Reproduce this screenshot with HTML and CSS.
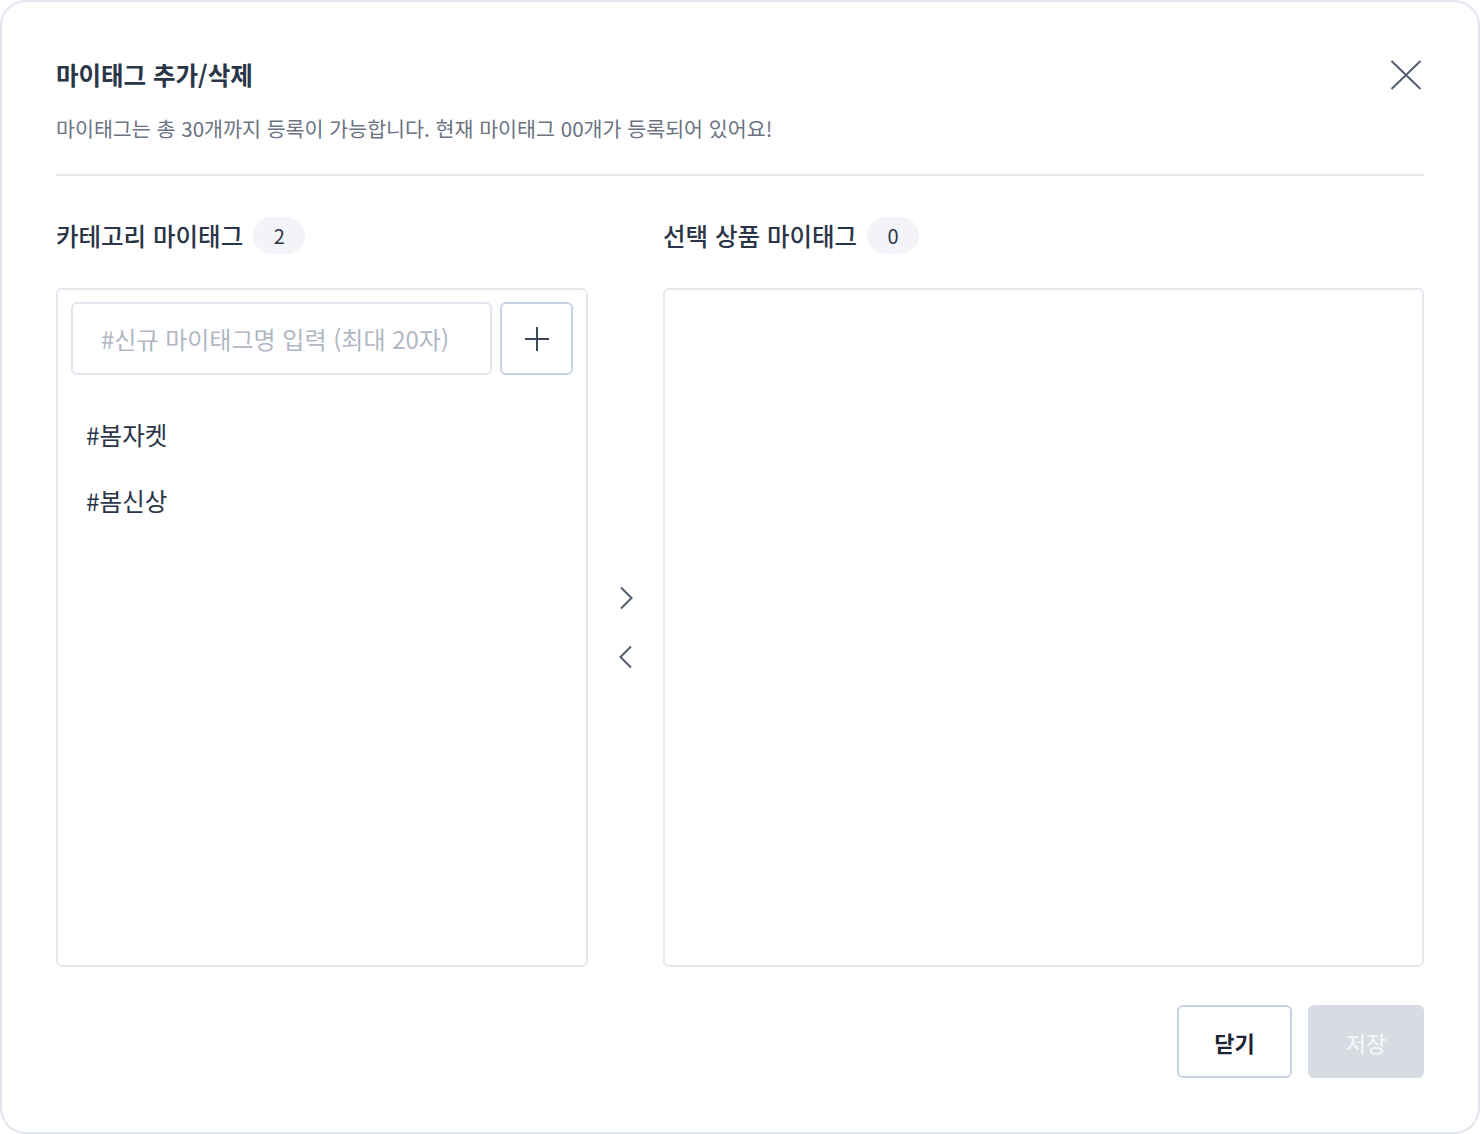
FILE: index.html
```html
<!DOCTYPE html>
<html lang="ko">

<head>
 <meta charset="UTF-8">
 <meta name="viewport" content="width=device-width, initial-scale=1.0">
 <title>마이태그 추가/삭제</title>
 <link rel="stylesheet" href="styles.css">
</head>

<body>

 <section class="modal">
  <header class="modal-header">
   <div>
    <h1 class="modal-title">마이태그 추가/삭제</h1>
    <p class="modal-desc">마이태그는 총 30개까지 등록이 가능합니다. 현재 마이태그 00개가 등록되어 있어요!</p>
   </div>
   <button class="btn-close" type="button" aria-label="닫기">
    <svg width="32" height="30" viewBox="0 0 32 30" fill="none" stroke="#525d70" stroke-width="2">
     <path d="M1.5 1L30.5 29M30.5 1L1.5 29" />
    </svg>
   </button>
  </header>

  <main class="tag-panels">
   <div class="panel">
    <h2 class="panel-title">카테고리 마이태그 <span class="count">2</span></h2>
    <div class="panel-box">
     <form class="tag-form">
      <input type="text" class="tag-input" placeholder="#신규 마이태그명 입력 (최대 20자)">
      <button class="btn-add" type="button" aria-label="추가">
       <svg width="26" height="26" viewBox="0 0 26 26" fill="none" stroke="#3d475a" stroke-width="2">
        <path d="M13 1V25M1 13H25" />
       </svg>
      </button>
     </form>
     <ul class="tag-list">
      <li>#봄자켓</li>
      <li>#봄신상</li>
     </ul>
    </div>
   </div>

   <div class="move-buttons">
    <button type="button" class="btn-move" aria-label="오른쪽으로 이동">
     <svg width="14" height="24" viewBox="0 0 14 24" fill="none" stroke="#525d70" stroke-width="2">
      <path d="M2 1.5L12.5 12L2 22.5" />
     </svg>
    </button>
    <button type="button" class="btn-move" aria-label="왼쪽으로 이동">
     <svg width="14" height="24" viewBox="0 0 14 24" fill="none" stroke="#525d70" stroke-width="2">
      <path d="M12 1.5L1.5 12L12 22.5" />
     </svg>
    </button>
   </div>

   <div class="panel">
    <h2 class="panel-title">선택 상품 마이태그 <span class="count">0</span></h2>
    <div class="panel-box"></div>
   </div>
  </main>

  <footer class="modal-footer">
   <button type="button" class="btn btn-line">닫기</button>
   <button type="button" class="btn btn-disabled" disabled>저장</button>
  </footer>
 </section>

</body>

</html>
```

FILE: styles.css
```css
:root {
 --main-font: "Noto Sans CJK KR", "Noto Sans", sans-serif;
 --text-color: #2b3548;
 --sub-color: #6b7384;
 --line-color: #e4e8ee;
 --btn-line: #c9d3e5;
}

html {
 box-sizing: border-box;
 font-family: var(--main-font);
}

*,
*::before,
*::after {
 box-sizing: inherit;
}

body {
 margin: 0;
 background: #fff;
 color: var(--text-color);
}

button {
 font-family: inherit;
 cursor: pointer;
}

/* - - - - Modal - - - - */
.modal {
 display: flex;
 flex-direction: column;
 height: 100vh;
 padding: 55px 54px 54px;
 border: 2px solid #e1e5ee;
 border-radius: 26px;
 background: #fff;
}

.modal-header {
 display: flex;
 justify-content: space-between;
 align-items: flex-start;
 padding-bottom: 31px;
 border-bottom: 2px solid var(--line-color);
}

.modal-title {
 margin: 0;
 font-size: 24.5px;
 line-height: 36px;
 font-weight: 700;
}

.modal-desc {
 margin: 20px 0 0;
 font-size: 20.6px;
 line-height: 30px;
 color: var(--sub-color);
}

.btn-close {
 display: flex;
 margin: 1px 0 0 0;
 padding: 2px;
 border: 0;
 background: none;
}

/* - - - - Paneles - - - - */
.tag-panels {
 display: grid;
 grid-template-columns: 532px 75px 1fr;
 margin-top: 41px;
}

.panel {
 display: flex;
 flex-direction: column;
}

.panel-title {
 display: flex;
 align-items: center;
 gap: 10px;
 margin: 0 0 34px;
 height: 37px;
 font-size: 24.5px;
 font-weight: 500;
}

.count {
 display: inline-flex;
 justify-content: center;
 align-items: center;
 width: 52px;
 height: 37px;
 border-radius: 19px;
 background: #f2f4f7;
 font-size: 20px;
 font-weight: 400;
}

.panel-box {
 height: 679px;
 padding: 12px 13px;
 border: 2px solid var(--line-color);
 border-radius: 6px;
}

.tag-form {
 display: flex;
 gap: 8px;
}

.tag-input {
 flex: 1;
 min-width: 0;
 height: 73px;
 padding: 0 0 0 28px;
 border: 2px solid #e0e5ee;
 border-radius: 6px;
 font-family: inherit;
 font-size: 24px;
 color: var(--text-color);
 outline: none;
}

.tag-input::placeholder {
 color: #b1b7c3;
}

.btn-add {
 display: flex;
 justify-content: center;
 align-items: center;
 width: 73px;
 height: 73px;
 padding: 0;
 border: 2px solid var(--btn-line);
 border-radius: 6px;
 background: #fff;
}

.tag-list {
 margin: 42px 0 0;
 padding: 0 0 0 15px;
 list-style: none;
}

.tag-list li {
 font-size: 24.5px;
 line-height: 36px;
 margin-bottom: 30px;
}

.move-buttons {
 display: flex;
 flex-direction: column;
 justify-content: center;
 align-items: center;
 gap: 35px;
 padding-top: 71px;
}

.btn-move {
 display: flex;
 padding: 0;
 border: 0;
 background: none;
}

/* - - - - Footer - - - - */
.modal-footer {
 display: flex;
 justify-content: flex-end;
 gap: 16px;
 margin-top: 38px;
}

.btn {
 height: 73px;
 border-radius: 6px;
 font-size: 22px;
 font-weight: 700;
}

.btn-line {
 width: 115px;
 border: 2px solid var(--btn-line);
 background: #fff;
 color: #1d2433;
}

.btn-disabled {
 width: 116px;
 border: 0;
 background: #d7dbe2;
 color: #f4f5f7;
 font-weight: 500;
 cursor: default;
}
```
